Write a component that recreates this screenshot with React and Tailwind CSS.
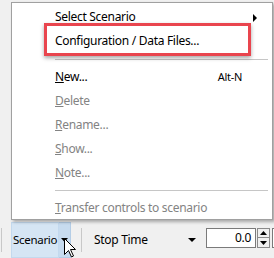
const font = { fontFamily: '"Noto Sans", "Open Sans", sans-serif', letterSpacing: "-0.3px" };

function Item({ children, disabled, shortcut, arrow, h = "h-[24px]" }) {
  return (
    <div className={`relative flex items-center ${h} pl-[43px] pr-[18px] text-[12px] ${disabled ? "text-[#838383]" : "text-[#000]"}`}>
      <span className="flex-1 whitespace-nowrap">{children}</span>
      {shortcut && <span className="mr-[12px] text-[11px]">{shortcut}</span>}
      {arrow && (
        <svg width="5" height="8" viewBox="0 0 5 8" className="absolute left-[241px] top-[9px]">
          <path d="M0 0 L4 4 L0 8 Z" fill="#000" />
        </svg>
      )}
    </div>
  );
}

function Cursor() {
  return (
    <svg width="13" height="20" viewBox="0 0 13 20" className="absolute left-[64px] top-[238px]">
      <path d="M0.5 0.5 L0.5 16.5 L4.5 12.5 L7.5 19 L9.5 18 L6.5 11.5 L11.5 11.5 Z" fill="#fff" stroke="#000" strokeWidth="1" strokeLinejoin="miter" />
    </svg>
  );
}

export default function App() {
  return (
    <div className="relative w-[274px] h-[258px] overflow-hidden bg-[#f0f0f0]" style={font}>
      <div className="h-[222px]" />

      {/* toolbar */}
      <div className="flex h-[36px] items-stretch">
        <div className="ml-[1px] mt-[6px] h-[24px] w-px shrink-0 bg-[#c8c8c8]" />
        <div className="ml-[9px] flex shrink-0">
          <div className="flex w-[48px] items-center whitespace-nowrap border border-[#c3d9ee] bg-[#d5e5f4] pl-[1px] text-[11.5px] text-black">
            Scenario
          </div>
          <div className="flex w-[12px] items-center justify-center border border-l-0 border-[#b4cde6] bg-[#c7dbef]">
            <svg width="7" height="4" viewBox="0 0 7 4"><path d="M0 0 H7 L3.5 4 Z" fill="#000" /></svg>
          </div>
        </div>
        <div className="ml-[10px] mt-[6px] h-[24px] w-px shrink-0 bg-[#c8c8c8]" />
        <div className="ml-[12px] flex w-[112px] shrink-0 items-center justify-between pr-[10px] text-[12px] text-black">
          <span>Stop Time</span>
          <svg width="8" height="4" viewBox="0 0 8 4"><path d="M0 0 H8 L4 4 Z" fill="#000" /></svg>
        </div>
        <div className="mt-[6px] flex h-[20px] shrink-0">
          <div className="flex w-[50px] shrink-0 items-center justify-end border border-[#7a7a7a] bg-white pr-[4px] text-[12px] text-black">
            0.0
          </div>
          <div className="ml-px flex w-[13px] shrink-0 flex-col">
            <div className="flex h-[10px] items-center justify-center border border-[#8a8a8a] bg-[#f0f0f0]">
              <svg width="7" height="4" viewBox="0 0 7 4"><path d="M3.5 0 L7 4 H0 Z" fill="#000" /></svg>
            </div>
            <div className="flex h-[10px] items-center justify-center border border-t-0 border-[#8a8a8a] bg-[#f0f0f0]">
              <svg width="7" height="4" viewBox="0 0 7 4"><path d="M0 0 H7 L3.5 4 Z" fill="#000" /></svg>
            </div>
          </div>
          <div className="ml-[2px] w-[10px] shrink-0 border border-[#7a7a7a] bg-white" />
        </div>
      </div>

      {/* popup menu */}
      <div className="absolute left-[11px] top-[2px] w-[262px] border border-[#a0a0a0] bg-white pt-[2px] shadow-[2px_2px_3px_rgba(0,0,0,0.3)]">
        <Item arrow>Select Scenario</Item>
        <Item>Configuration / Data Files...</Item>
        <div className="h-[12px] pt-[6px] pl-[43px] pr-[4px]"><div className="h-px bg-[#c6c6c6]" /></div>
        <Item shortcut="Alt-N"><u>N</u>ew...</Item>
        <Item disabled><u>D</u>elete</Item>
        <Item disabled><u>R</u>ename...</Item>
        <Item disabled><u>S</u>how...</Item>
        <Item disabled><u>N</u>ote...</Item>
        <div className="h-[11px] pt-[5px] pl-[43px] pr-[4px]"><div className="h-px bg-[#c6c6c6]" /></div>
        <Item disabled h="h-[23px]"><u>T</u>ransfer controls to scenario</Item>
      </div>

      {/* highlight annotation */}
      <div className="absolute left-[44px] top-[23px] h-[33px] w-[207px] border-[3px] border-[#e9454e] shadow-[0_2px_4px_rgba(0,0,0,0.35)]" />

      <Cursor />
    </div>
  );
}
